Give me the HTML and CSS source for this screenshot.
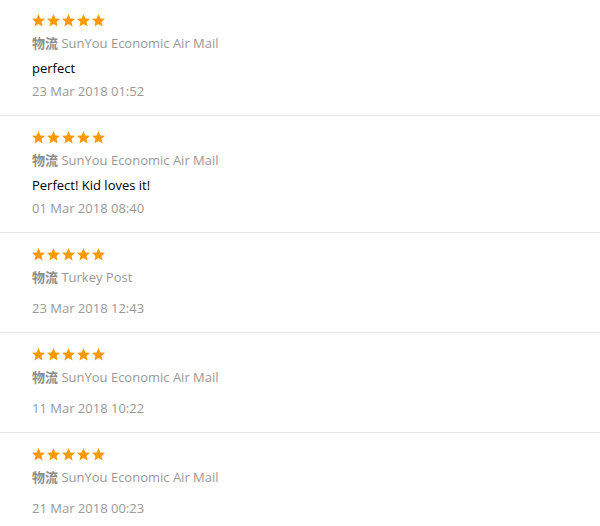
FILE: index.html
```html
<!DOCTYPE html>
<html lang="en">
<head>
    <meta charset="UTF-8">
    <meta name="viewport" content="width=device-width, initial-scale=1.0">
    <title>Feedback</title>
    <link rel="stylesheet" href="styles.css">
</head>
<body>

<svg width="0" height="0" class="defs">
    <defs>
        <polygon id="star" points="6.5,0 8.4,4.4 13,4.8 9.5,7.9 10.6,12.6 6.5,10.1 2.4,12.6 3.5,7.9 0,4.8 4.6,4.4"/>
    </defs>
</svg>

<div class="feedback-list">

    <div class="review">
        <svg class="stars" width="74" height="13" viewBox="0 0 74 13">
            <use href="#star" x="0"/><use href="#star" x="15"/><use href="#star" x="30"/><use href="#star" x="45"/><use href="#star" x="60"/>
        </svg>
        <div class="logistics"><b>物流</b> SunYou Economic Air Mail</div>
        <div class="comment">perfect</div>
        <div class="date">23 Mar 2018 01:52</div>
    </div>

    <div class="review">
        <svg class="stars" width="74" height="13" viewBox="0 0 74 13">
            <use href="#star" x="0"/><use href="#star" x="15"/><use href="#star" x="30"/><use href="#star" x="45"/><use href="#star" x="60"/>
        </svg>
        <div class="logistics"><b>物流</b> SunYou Economic Air Mail</div>
        <div class="comment">Perfect! Kid loves it!</div>
        <div class="date">01 Mar 2018 08:40</div>
    </div>

    <div class="review">
        <svg class="stars" width="74" height="13" viewBox="0 0 74 13">
            <use href="#star" x="0"/><use href="#star" x="15"/><use href="#star" x="30"/><use href="#star" x="45"/><use href="#star" x="60"/>
        </svg>
        <div class="logistics"><b>物流</b> Turkey Post</div>
        <div class="comment"></div>
        <div class="date">23 Mar 2018 12:43</div>
    </div>

    <div class="review">
        <svg class="stars" width="74" height="13" viewBox="0 0 74 13">
            <use href="#star" x="0"/><use href="#star" x="15"/><use href="#star" x="30"/><use href="#star" x="45"/><use href="#star" x="60"/>
        </svg>
        <div class="logistics"><b>物流</b> SunYou Economic Air Mail</div>
        <div class="comment"></div>
        <div class="date">11 Mar 2018 10:22</div>
    </div>

    <div class="review">
        <svg class="stars" width="74" height="13" viewBox="0 0 74 13">
            <use href="#star" x="0"/><use href="#star" x="15"/><use href="#star" x="30"/><use href="#star" x="45"/><use href="#star" x="60"/>
        </svg>
        <div class="logistics"><b>物流</b> SunYou Economic Air Mail</div>
        <div class="comment"></div>
        <div class="date">21 Mar 2018 00:23</div>
    </div>

</div>

</body>
</html>
```

FILE: styles.css
```css
body {
    font-family: "Open Sans", "Noto Sans CJK SC", sans-serif;
    font-size: 13px;
    margin: 0;
    padding: 0;
    background-color: #fff;
    overflow: hidden;
}
.defs {
    position: absolute;
}
.feedback-list {
    display: flex;
    flex-direction: column;
}
.review {
    display: flex;
    flex-direction: column;
    align-items: flex-start;
    padding: 14px 32px 15px;
    border-bottom: 1px solid #e8e8e8;
}
.review + .review {
    padding-top: 15px;
}
.stars {
    display: block;
    fill: #f90;
}
.logistics {
    margin-top: 7px;
    line-height: 18px;
    color: #999;
}
.logistics b {
    color: #8c8c8c;
}
/* empty comments still keep their top margin */
.comment {
    margin-top: 8px;
    line-height: 17px;
    color: #000;
}
.date {
    margin-top: 5px;
    line-height: 18px;
    color: #999;
}
```
